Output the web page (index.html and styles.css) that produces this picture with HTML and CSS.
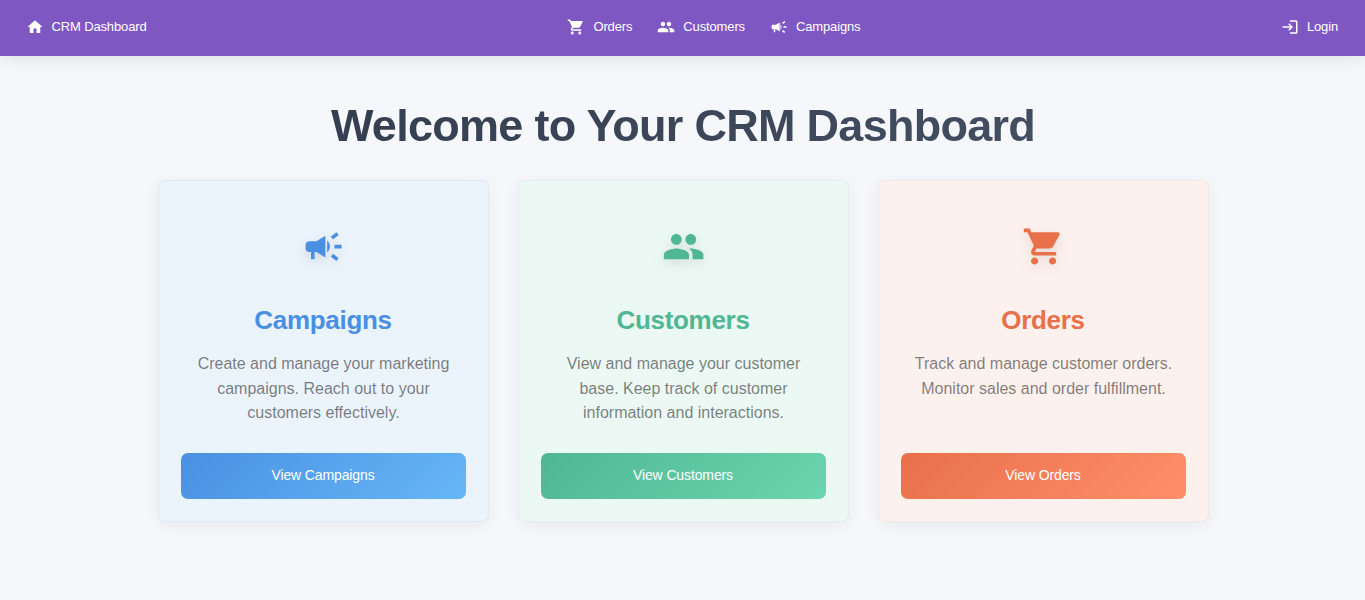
FILE: index.html
```html
<!DOCTYPE html>
<html lang="en">
<head>
<meta charset="utf-8">
<title>CRM Dashboard</title>
<link rel="stylesheet" href="styles.css">
</head>
<body>
<svg class="sprite" aria-hidden="true">
  <symbol id="home" viewBox="0 0 24 24"><path d="M10 20v-6h4v6h5v-8h3L12 3 2 12h3v8z"/></symbol>
  <symbol id="cart" viewBox="0 0 24 24"><path d="M7 18c-1.100 0-1.990.9-1.990 2S5.900 22 7 22s2-.9 2-2-.9-2-2-2M1 2v2h2l3.600 7.590-1.350 2.450c-.16.28-.25.61-.25.96 0 1.100.9 2 2 2h12v-2H7.420c-.14 0-.25-.11-.25-.25l.03-.12.9-1.630h7.450c.75 0 1.410-.41 1.750-1.030l3.580-6.490c.08-.14.12-.31.12-.48 0-.55-.45-1-1-1H5.210l-.94-2zm16 16c-1.100 0-1.990.9-1.990 2s.89 2 1.990 2 2-.9 2-2-.9-2-2-2"/></symbol>
  <symbol id="people" viewBox="0 0 24 24"><path d="M16 11c1.660 0 2.990-1.340 2.990-3S17.660 5 16 5s-3 1.340-3 3 1.340 3 3 3m-8 0c1.660 0 2.990-1.340 2.990-3S9.660 5 8 5 5 6.340 5 8s1.340 3 3 3m0 2c-2.330 0-7 1.170-7 3.500V19h14v-2.500c0-2.330-4.670-3.500-7-3.500m8 0c-.29 0-.62.020-.97.050 1.160.84 1.970 1.970 1.970 3.450V19h6v-2.500c0-2.330-4.670-3.500-7-3.500"/></symbol>
  <symbol id="campaign" viewBox="0 0 24 24"><path d="M18 11v2h4v-2zm-2 6.610c.96.71 2.210 1.650 3.200 2.390.4-.53.8-1.070 1.200-1.600-.99-.74-2.240-1.680-3.200-2.400-.4.540-.8 1.080-1.200 1.610M20.400 5.600c-.4-.53-.8-1.070-1.200-1.600-.99.740-2.240 1.680-3.200 2.400.4.530.8 1.070 1.200 1.600.96-.72 2.210-1.650 3.200-2.400M4 9c-1.100 0-2 .9-2 2v2c0 1.100.9 2 2 2h1v4h2v-4h1l5 3V6L8 9zm11.500 3c0-1.330-.58-2.530-1.500-3.350v6.690c.92-.81 1.500-2.010 1.500-3.340"/></symbol>
  <symbol id="login" viewBox="0 0 24 24"><path d="M11 7 9.600 8.400l2.600 2.600H2v2h10.200l-2.600 2.600L11 17l5-5zm9 12h-8v2h8c1.100 0 2-.9 2-2V5c0-1.100-.9-2-2-2h-8v2h8z"/></symbol>
</svg>
<header class="bar">
  <a class="link brand"><svg><use href="#home"/></svg><span>CRM Dashboard</span></a>
  <nav class="nav">
    <a class="link"><svg><use href="#cart"/></svg><span>Orders</span></a>
    <a class="link"><svg><use href="#people"/></svg><span>Customers</span></a>
    <a class="link"><svg><use href="#campaign"/></svg><span>Campaigns</span></a>
  </nav>
  <a class="link login"><svg><use href="#login"/></svg><span>Login</span></a>
</header>
<main class="main">
  <h1 class="title">Welcome to Your CRM Dashboard</h1>
  <div class="cards">
    <section class="card blue">
      <svg class="icon"><use href="#campaign"/></svg>
      <h2 class="name">Campaigns</h2>
      <p class="text">Create and manage your marketing campaigns. Reach out to your customers effectively.</p>
      <button class="button">View Campaigns</button>
    </section>
    <section class="card green">
      <svg class="icon"><use href="#people"/></svg>
      <h2 class="name">Customers</h2>
      <p class="text">View and manage your customer base. Keep track of customer information and interactions.</p>
      <button class="button">View Customers</button>
    </section>
    <section class="card orange">
      <svg class="icon"><use href="#cart"/></svg>
      <h2 class="name">Orders</h2>
      <p class="text">Track and manage customer orders. Monitor sales and order fulfillment.</p>
      <button class="button">View Orders</button>
    </section>
  </div>
</main>
</body>
</html>
```
FILE: styles.css
```css
* { box-sizing: border-box; }
body {
  margin: 0;
  min-height: 600px;
  background: #f5f7fb;
  font-family: "Liberation Sans", Arial, sans-serif;
}
.sprite { display: none; }
.bar {
  display: flex;
  justify-content: space-between;
  align-items: center;
  height: 56px;
  padding: 0 27px 2px 26px;
  background: #7e57c2;
  color: #fff;
  box-shadow: 0 4px 18px rgba(0, 0, 0, 0.08);
}
.nav { display: flex; gap: 25px; }
.link {
  display: flex;
  align-items: center;
  gap: 7.500px;
  font-size: 13px;
  letter-spacing: -0.14px;
  line-height: 20px;
}
.nav .link { gap: 8px; }
.link svg { width: 18px; height: 18px; fill: currentColor; }
.main { padding: 43px 0 0 1px; }
.title {
  margin: 0 0 27px;
  font-size: 45px;
  line-height: 54px;
  letter-spacing: -0.72px;
  text-align: center;
  background: linear-gradient(135deg, #2d3748, #4a5568);
  -webkit-background-clip: text;
  background-clip: text;
  color: transparent;
}
.cards {
  display: grid;
  grid-template-columns: repeat(3, 331px);
  gap: 29px;
  justify-content: center;
}
.card {
  display: flex;
  flex-direction: column;
  align-items: center;
  height: 342px;
  padding: 44px 22px 22px;
  border: 1px solid rgba(0, 0, 0, 0.04);
  border-radius: 7px;
  box-shadow: 0 4px 18px rgba(0, 0, 0, 0.06);
  text-align: center;
}
.icon {
  width: 43.200px;
  height: 43.200px;
  margin-left: 1.500px;
  fill: currentColor;
  filter: drop-shadow(0 4px 6px rgba(0, 0, 0, 0.1));
}
.name {
  margin: 35px 0 15px;
  font-size: 26px;
  letter-spacing: -0.3px;
  line-height: 34px;
}
.text {
  width: 270px;
  margin: 0;
  padding-left: 1px;
  color: rgba(0, 0, 0, 0.5);
  font-size: 16px;
  line-height: 24.500px;
}
.button {
  width: 100%;
  height: 46px;
  margin-top: auto;
  padding: 0 0 2px;
  border: 0;
  border-radius: 7px;
  color: #fff;
  font: 14px "Liberation Sans", Arial, sans-serif;
  letter-spacing: -0.12px;
}
.blue { background: #ebf3fc; color: #4a90e2; }
.green { background: #ebf8f4; color: #50b794; }
.orange { background: #fdf1ed; color: #e8704a; }
.blue .button { background: linear-gradient(135deg, #4a90e2, #67b7f7); }
.green .button { background: linear-gradient(135deg, #50b794, #6bd5af); }
.orange .button { background: linear-gradient(135deg, #e8704a, #ff8f6b); }
```
